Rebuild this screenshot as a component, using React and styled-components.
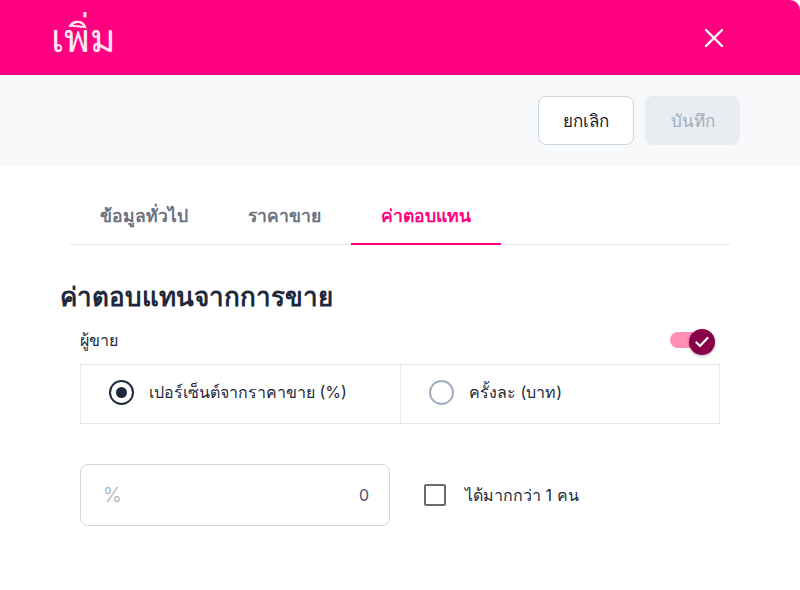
import React from 'react';
import styled, { createGlobalStyle } from 'styled-components';

const GlobalStyle = createGlobalStyle`
  html, body {
    margin: 0;
    padding: 0;
    background: #ffffff;
    font-family: Inter, "Noto Sans", sans-serif;
  }
  * {
    box-sizing: border-box;
  }
`;

function App() {
  return (
    <>
      <GlobalStyle />
      <Modal>
        <Header>
          <Title>เพิ่ม</Title>
          <CloseButton aria-label="close">
            <svg width="20" height="20" viewBox="0 0 20 20" fill="none">
              <path d="M2 2L18 18M18 2L2 18" stroke="#fff" strokeWidth="2.4" strokeLinecap="round" />
            </svg>
          </CloseButton>
        </Header>
        <Toolbar>
          <Button>ยกเลิก</Button>
          <Button disabled>บันทึก</Button>
        </Toolbar>
        <Body>
          <Tabs>
            <Tab>ข้อมูลทั่วไป</Tab>
            <Tab>ราคาขาย</Tab>
            <Tab active>ค่าตอบแทน</Tab>
          </Tabs>
          <Section>
            <Heading>ค่าตอบแทนจากการขาย</Heading>
            <LabelRow>
              <Label>ผู้ขาย</Label>
              <Switch>
                <Thumb>
                  <svg width="14" height="12" viewBox="0 0 14 12" fill="none">
                    <path d="M1.5 6.5L5 10L12.5 2" stroke="#fff" strokeWidth="2.2" strokeLinecap="round" strokeLinejoin="round" />
                  </svg>
                </Thumb>
              </Switch>
            </LabelRow>
            <RadioGroup>
              <RadioOption>
                <Radio checked />
                <OptionText>เปอร์เซ็นต์จากราคาขาย (%)</OptionText>
              </RadioOption>
              <RadioOption>
                <Radio />
                <OptionText>ครั้งละ (บาท)</OptionText>
              </RadioOption>
            </RadioGroup>
            <InputRow>
              <InputBox>
                <Unit>%</Unit>
                <Value>0</Value>
              </InputBox>
              <CheckLabel>
                <CheckBox />
                <span>ได้มากกว่า 1 คน</span>
              </CheckLabel>
            </InputRow>
          </Section>
        </Body>
      </Modal>
    </>
  );
}

const Modal = styled.div`
  width: 800px;
  min-height: 590px;
  background: #ffffff;
`;

const Header = styled.div`
  height: 75px;
  background: #ff0080;
  border-top-right-radius: 10px;
  display: flex;
  align-items: center;
  justify-content: space-between;
  padding: 0 74px 0 51px;
`;

const Title = styled.h1`
  margin: 0;
  color: #fde7f2;
  font-size: 39px;
  font-weight: 400;
  line-height: 1;
`;

const CloseButton = styled.button`
  border: none;
  background: transparent;
  padding: 0;
  width: 24px;
  height: 24px;
  display: flex;
  align-items: center;
  justify-content: center;
  cursor: pointer;
`;

const Toolbar = styled.div`
  height: 91px;
  background: #f8f9fb;
  display: flex;
  align-items: center;
  justify-content: flex-end;
  gap: 11px;
  padding: 0 60px 0 0;
`;

const Button = styled.button`
  height: 49px;
  min-width: 95px;
  padding: 0 24px;
  border-radius: 8px;
  font-family: inherit;
  font-size: 17px;
  border: 1px solid ${({ disabled }) => (disabled ? '#e9ecf0' : '#cbd5e1')};
  background: ${({ disabled }) => (disabled ? '#e9ecf0' : '#ffffff')};
  color: ${({ disabled }) => (disabled ? '#a0aec0' : '#1a202c')};
`;

const Body = styled.div`
  padding: 33px 70px 0 70px;
`;

const Tabs = styled.div`
  display: flex;
  border-bottom: 1px solid #e2e8f0;
`;

const Tab = styled.div`
  padding: 3px 30px 0;
  height: 46px;
  display: flex;
  align-items: flex-start;
  font-size: 17.5px;
  font-weight: 700;
  color: ${({ active }) => (active ? '#ff0080' : '#6b7280')};
  border-bottom: 2px solid ${({ active }) => (active ? '#ff0080' : 'transparent')};
  margin-bottom: -1px;
`;

const Section = styled.div`
  margin: 0 -10px;
  padding-top: 34px;
`;

const Heading = styled.h2`
  margin: 0 0 10px;
  font-size: 26px;
  font-weight: 700;
  color: #1e293b;
  line-height: 36px;
`;

const LabelRow = styled.div`
  display: flex;
  align-items: center;
  justify-content: space-between;
  padding: 0 40px 0 20px;
  height: 30px;
`;

const Label = styled.div`
  font-size: 16px;
  color: #1e293b;
`;

const Switch = styled.div`
  position: relative;
  width: 30px;
  height: 16px;
  border-radius: 8px;
  background: #ff8fb4;
`;

const Thumb = styled.div`
  position: absolute;
  right: -15px;
  top: -3px;
  width: 26px;
  height: 26px;
  border-radius: 50%;
  background: #8a0048;
  box-shadow: 0 1px 3px rgba(0, 0, 0, 0.3);
  display: flex;
  align-items: center;
  justify-content: center;
`;

const RadioGroup = styled.div`
  margin: 9px 20px 0;
  display: grid;
  grid-template-columns: 1fr 1fr;
  border: 1px solid #e2e8f0;
  height: 60px;
`;

const RadioOption = styled.div`
  display: flex;
  align-items: center;
  gap: 15px;
  padding: 0 0 4px 28px;
  & + & {
    border-left: 1px solid #e2e8f0;
  }
`;

const Radio = styled.span`
  width: 25px;
  height: 25px;
  border-radius: 50%;
  border: 2px solid ${({ checked }) => (checked ? '#1e293b' : '#a0aec0')};
  display: flex;
  align-items: center;
  justify-content: center;
  &::after {
    content: '';
    width: 11px;
    height: 11px;
    border-radius: 50%;
    background: ${({ checked }) => (checked ? '#1e293b' : 'transparent')};
  }
`;

const OptionText = styled.span`
  font-size: 16px;
  color: #1e293b;
`;

const InputRow = styled.div`
  margin: 40px 20px 0;
  display: flex;
  align-items: center;
  gap: 34px;
`;

const InputBox = styled.div`
  width: 310px;
  height: 62px;
  border: 1px solid #cbd5e1;
  border-radius: 8px;
  display: flex;
  align-items: center;
  justify-content: space-between;
  padding: 0 20px 0 22px;
`;

const Unit = styled.span`
  font-size: 20px;
  font-weight: 300;
  color: #a0aec0;
`;

const Value = styled.span`
  font-size: 16px;
  color: #4a5568;
`;

const CheckLabel = styled.label`
  display: flex;
  align-items: center;
  gap: 19px;
  font-size: 16px;
  color: #1e293b;
`;

const CheckBox = styled.span`
  width: 22px;
  height: 22px;
  border: 2px solid #6b6b6b;
  border-radius: 2px;
`;

export default App;
